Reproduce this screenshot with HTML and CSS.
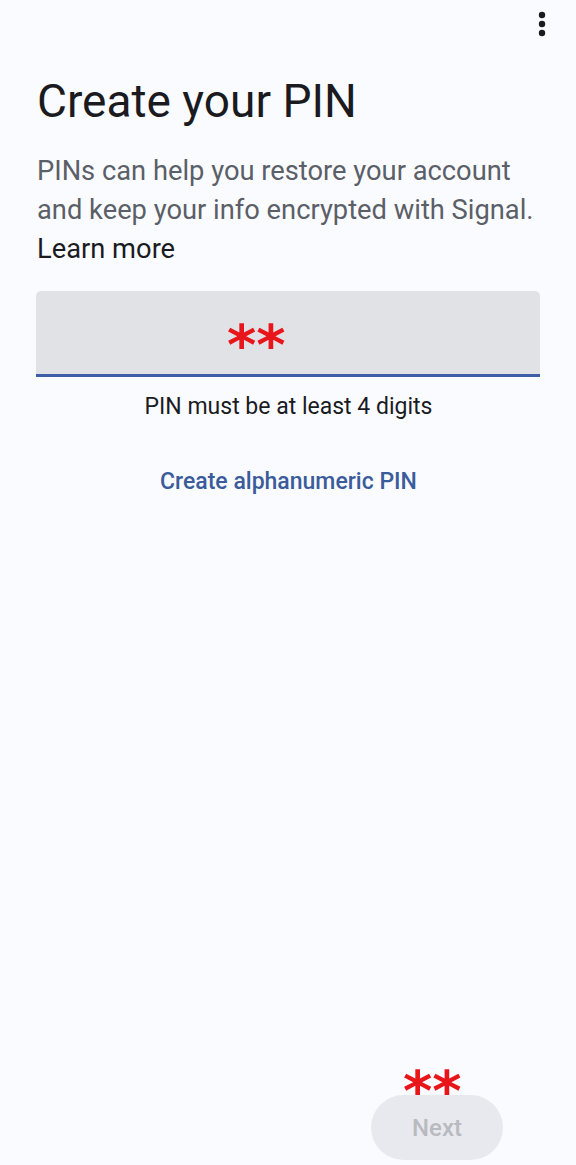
FILE: index.html
```html
<!DOCTYPE html>
<html lang="en">
<head>
<meta charset="utf-8">
<title>Create your PIN</title>
<link rel="stylesheet" href="styles.css">
</head>
<body>
<div class="screen">
  <div class="topbar">
    <button class="menu" aria-label="More options">
      <svg width="8" height="26" viewBox="0 0 8 26"><circle cx="4" cy="4" r="3.2" fill="#1b1b1f"/><circle cx="4" cy="13" r="3.2" fill="#1b1b1f"/><circle cx="4" cy="22" r="3.2" fill="#1b1b1f"/></svg>
    </button>
  </div>
  <h1 class="title">Create your PIN</h1>
  <p class="desc">PINs can help you restore your account and keep your info encrypted with Signal. <span class="learn">Learn more</span></p>
  <div class="field"><span class="pin">**</span></div>
  <div class="hint">PIN must be at least 4 digits</div>
  <div class="link">Create alphanumeric PIN</div>
  <div class="spacer"></div>
  <div class="footer">
    <button class="next"><span class="mark">**</span>Next</button>
  </div>
</div>
</body>
</html>
```

FILE: styles.css
```css
html, body {
  margin: 0;
  padding: 0;
  background: #fafbff;
}
body {
  font-family: Roboto, "Noto Sans", sans-serif;
}
.screen {
  height: 1165px;
  box-sizing: border-box;
  display: flex;
  flex-direction: column;
  padding: 0 36px 5px 37px;
}
.topbar {
  height: 50px;
  display: flex;
  justify-content: flex-end;
  align-items: flex-start;
  margin-right: -36px;
}
.menu {
  border: 0;
  background: none;
  padding: 11px 30px 0 0;
  line-height: 0;
}
.title {
  margin: 25px 0 0;
  font-weight: 400;
  font-size: 46px;
  line-height: 52px;
  color: #1b1b1f;
}
.desc {
  margin: 25px 0 0;
  font-size: 27.3px;
  line-height: 39px;
  color: #5b5f67;
}
.learn {
  display: block;
  color: #1b1b1f;
}
.field {
  position: relative;
  margin: 22px 0 0 -1px;
  height: 83px;
  background: #e1e2e6;
  border-radius: 5px 5px 0 0;
  border-bottom: 3px solid #3d5ea8;
}
.pin,
.mark {
  position: absolute;
  font-family: "DejaVu Sans", sans-serif;
  color: #e8151b;
  font-weight: 700;
  font-size: 56px;
  line-height: 20px;
}
.pin {
  left: 191px;
  top: 44px;
}
.hint {
  margin-top: 16px;
  text-align: center;
  font-size: 23px;
  line-height: 28px;
  color: #1b1b1f;
}
.link {
  margin-top: 47px;
  text-align: center;
  font-size: 23px;
  font-weight: 500;
  line-height: 28px;
  color: #3b5c9b;
}
.spacer {
  flex: 1;
}
.footer {
  display: flex;
  justify-content: flex-end;
  padding-right: 37px;
}
.next {
  position: relative;
  width: 132px;
  height: 65px;
  border: 0;
  border-radius: 33px;
  background: #e8e9ee;
  color: #b9babf;
  font-family: Roboto, "Noto Sans", sans-serif;
  font-size: 24px;
  font-weight: 500;
}
.mark {
  left: 32px;
  top: -14px;
}
```
